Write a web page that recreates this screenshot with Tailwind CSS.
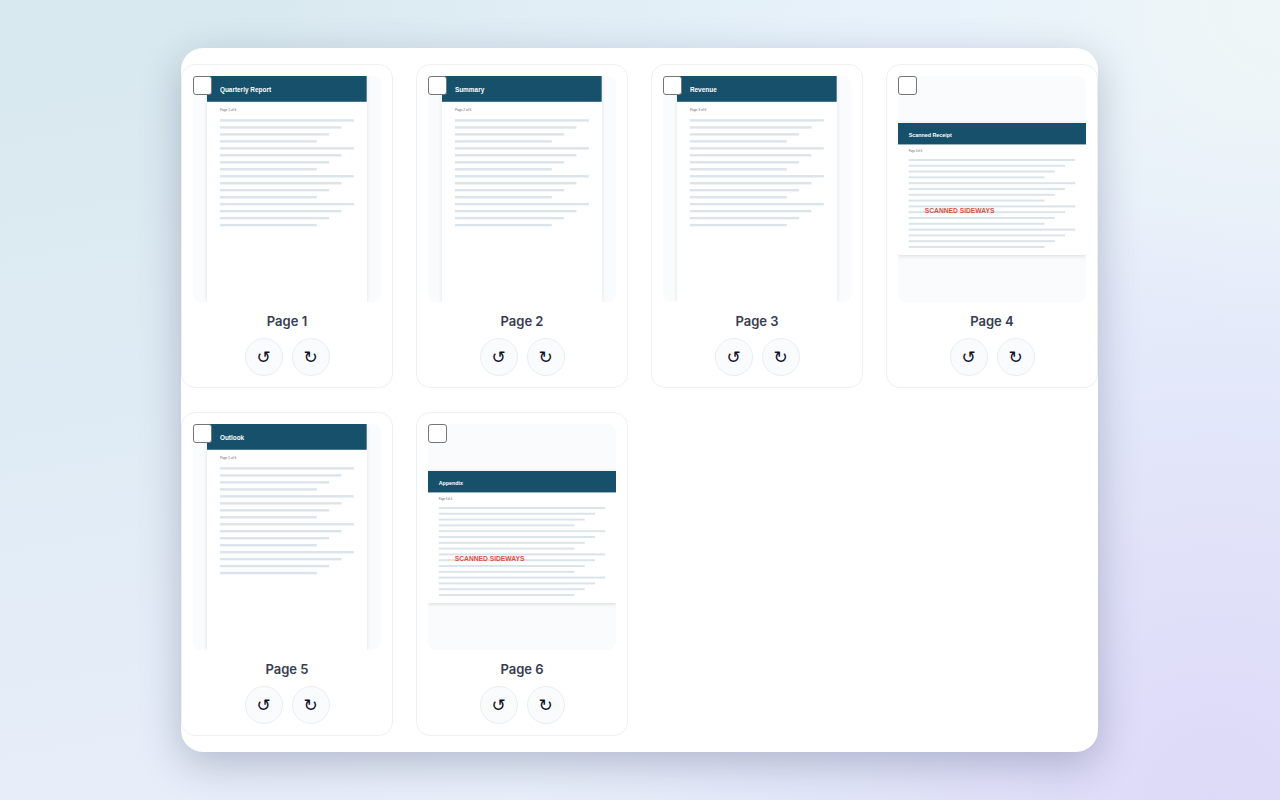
<!DOCTYPE html>
<html lang="en">
<head>
<meta charset="utf-8">
<meta name="viewport" content="width=device-width, initial-scale=1">
<title>Rotate pages</title>
<script src="https://cdn.jsdelivr.net/npm/@tailwindcss/browser@4"></script>
</head>
<body class="min-h-screen bg-[#e8effb] bg-[radial-gradient(circle_at_100%_0%,#eef6f6_0%,#eef6f600_22%),radial-gradient(circle_at_95%_100%,#ddd9f8_0%,#ddd9f800_48%),linear-gradient(90deg,#e8f2fb00_20%,#e8f2fb_70%),linear-gradient(170deg,#d8e9ef_5%,#e8eefa_85%)] py-12 pr-[182px] pl-[181px] font-[Inter,sans-serif]">
<main class="overflow-hidden rounded-[22px] bg-white py-4 shadow-[0_12px_40px_rgba(30,40,80,0.26)]">
  <ul id="pages" class="grid grid-cols-4 gap-x-[23px] gap-y-6"></ul>
</main>

<template id="card">
  <li class="relative rounded-[14px] border border-[#edf0f3] bg-white p-[11px]">
    <div class="preview flex aspect-[188/226] items-center justify-center overflow-hidden rounded-[8px] bg-[#fafbfc]"></div>
    <input type="checkbox" class="absolute top-[11px] left-[11px] size-[19px] appearance-none rounded-[3px] border border-[#767676] bg-white checked:bg-[#16506a]">
    <p class="mt-[9px] text-center text-[13px] leading-5 font-semibold text-[#373c50]"></p>
    <div class="mt-[7px] flex justify-center gap-[9px]">
      <button type="button" aria-label="Rotate left" class="flex size-[38px] items-center justify-center rounded-full border border-[#eaedf1] bg-[#fafbfd] font-['DejaVu_Sans',sans-serif] text-[17px] leading-none text-[#0c0e26]">↺</button>
      <button type="button" aria-label="Rotate right" class="flex size-[38px] items-center justify-center rounded-full border border-[#eaedf1] bg-[#fafbfd] font-['DejaVu_Sans',sans-serif] text-[17px] leading-none text-[#0c0e26]">↻</button>
    </div>
  </li>
</template>

<script>
const pages = [
  ['Quarterly Report', false], ['Summary', false], ['Revenue', false],
  ['Scanned Receipt', true], ['Outlook', false], ['Appendix', true],
];
const list = document.getElementById('pages');
const tpl = document.getElementById('card');
pages.forEach(([title, wide], i) => {
  const n = i + 1;
  const [w, h] = wide ? [842, 595] : [595, 842];
  let lines = '';
  for (let k = 0; k < 16; k++) {
    lines += `<rect x="48" y="${161 + k * 26}" width="${w - 96 - (k % 4) * 46}" height="9" fill="#dce4eb"/>`;
  }
  const card = tpl.content.cloneNode(true);
  card.querySelector('.preview').innerHTML =
    `<svg viewBox="0 0 ${w} ${h}" role="img" aria-label="${title}" class="${wide ? 'w-full bg-white shadow-[0_1px_4px_rgba(0,0,0,0.14)]' : 'h-full bg-white shadow-[0_1px_4px_rgba(0,0,0,0.10)]'} font-['Liberation_Sans',sans-serif]">
      <rect width="${w}" height="96" fill="#16506a"/>
      <text x="48" y="61" font-size="24" font-weight="700" fill="#fff">${title}</text>
      <text x="48" y="130" font-size="12" fill="#666">Page ${n} of 6</text>
      ${lines}
      ${wide ? '<text x="120" y="403" font-size="30" font-weight="700" fill="#d9503f">SCANNED SIDEWAYS</text>' : ''}
    </svg>`;
  card.querySelector('p').textContent = 'Page ' + n;
  card.querySelector('input').setAttribute('aria-label', 'Select page ' + n);
  list.appendChild(card);
});
</script>
</body>
</html>
